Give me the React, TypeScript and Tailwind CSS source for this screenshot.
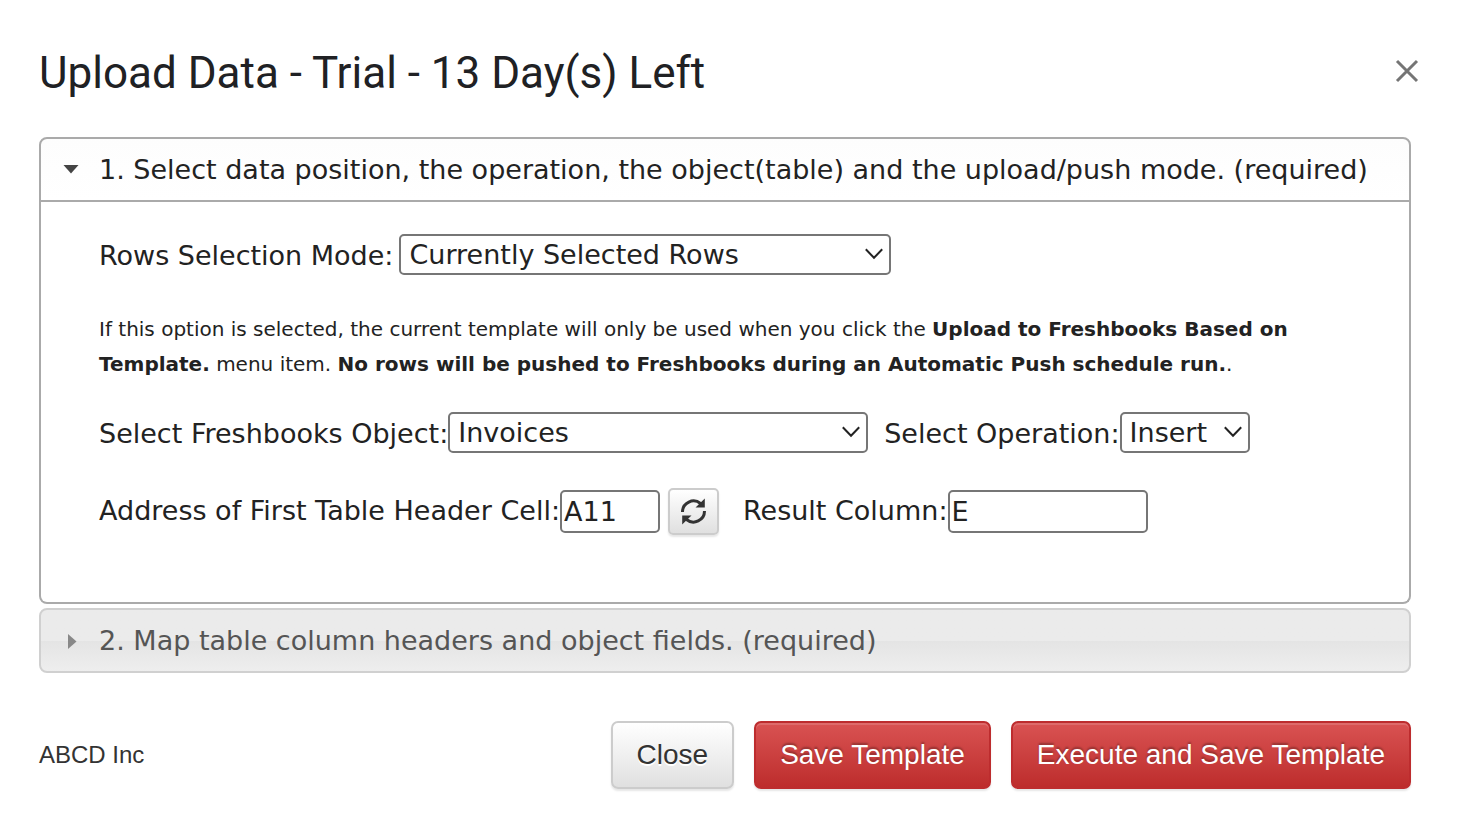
import { useState } from "react";
import type { ReactNode } from "react";
import clsx from "clsx";

interface SelectFieldProps {
  id: string;
  label: string;
  options: string[];
  className: string;
  labelClassName?: string;
}

function SelectField({ id, label, options, className, labelClassName }: SelectFieldProps) {
  return (
    <div className="flex items-center">
      <label htmlFor={id} className={clsx("whitespace-nowrap pt-0.5 leading-[39px]", labelClassName)}>
        {label}
      </label>
      <div className={clsx("relative", className)}>
        <select
          id={id}
          className="block h-[41px] w-full appearance-none rounded-[5px] border-2 border-[#767676] bg-white pl-2 pr-9 text-[27px] leading-[37px] text-[#222]"
        >
          {options.map((option) => (
            <option key={option}>{option}</option>
          ))}
        </select>
        <svg
          className="pointer-events-none absolute right-2 top-[14px] h-3 w-[18px]"
          viewBox="0 0 18 12"
          fill="none"
          stroke="#222"
          strokeWidth="2"
          aria-hidden="true"
        >
          <path d="M0.8 1.3 9 9.8l8.2-8.5" />
        </svg>
      </div>
    </div>
  );
}

interface TextFieldProps {
  id: string;
  label: string;
  value: string;
  className: string;
}

function TextField({ id, label, value, className }: TextFieldProps) {
  return (
    <div className="flex items-center">
      <label htmlFor={id} className="whitespace-nowrap">
        {label}
      </label>
      <input
        id={id}
        type="text"
        defaultValue={value}
        className={clsx(
          "h-[43px] rounded-[5px] border-2 border-[#767676] bg-white px-0.5 text-[27px] leading-[39px] text-[#222]",
          className
        )}
      />
    </div>
  );
}

interface SectionProps {
  title: string;
  open: boolean;
  onToggle: () => void;
  children?: ReactNode;
}

function Section({ title, open, onToggle, children }: SectionProps) {
  return (
    <section>
      <h2>
        <button
          type="button"
          aria-expanded={open}
          onClick={onToggle}
          className={clsx(
            "flex h-[65px] w-full items-center border-2 pl-[21px] text-left text-[27px]",
            open
              ? "rounded-t-lg border-[#aaa] bg-linear-to-b from-[#fdfdfd] to-white text-[#222]"
              : "rounded-lg border-[#d0d0d0] bg-linear-to-b from-[#ebebeb] from-50% via-[#e4e4e4] via-50% to-[#eee] text-[#555]"
          )}
        >
          <svg className="mr-[17px] size-5 shrink-0" viewBox="0 0 20 20" aria-hidden="true">
            {open ? (
              <path d="M1.500 5h15l-7.500 8.500z" fill="#444" />
            ) : (
              <path d="M6 3v15l8.500-7.500z" fill="#888" />
            )}
          </svg>
          <span className="whitespace-nowrap pt-0.5">{title}</span>
        </button>
      </h2>
      {open && (
        <div className="rounded-b-lg border-2 border-t-0 border-[#aaa] px-[58px] pb-[67px] pt-8">
          {children}
        </div>
      )}
    </section>
  );
}

function ActionButton({ children, primary }: { children: ReactNode; primary?: boolean }) {
  return (
    <button
      type="button"
      className={clsx(
        "h-[68px] whitespace-nowrap rounded-[7px] border-2 px-6 text-[28px]",
        primary
          ? "border-[#bd2c2e] bg-linear-to-b from-[#d95252] to-[#bd2c2c] text-white shadow-[inset_0_2px_0_rgba(255,255,255,0.15),0_2px_2px_rgba(0,0,0,0.1)] [text-shadow:0_-2px_2px_rgba(0,0,0,0.3)]"
          : "border-[#ccc] bg-linear-to-b from-white to-[#e0e0e0] text-[#333] shadow-[0_2px_2px_rgba(0,0,0,0.1)] [text-shadow:0_2px_0_#fff]"
      )}
    >
      {children}
    </button>
  );
}

export default function App() {
  const [active, setActive] = useState(1);

  return (
    <div className="min-h-screen bg-white pb-[49px] pl-[39px] pr-[71px] font-['Verdana','DejaVu_Sans',sans-serif] text-[27px] text-[#222]">
      <header className="-mr-3 flex items-center justify-between pb-9 pt-[45px]">
        <h1 className="font-['Google_Sans','Roboto',sans-serif] text-[44px] leading-[56px] text-[#202124]">
          Upload Data - Trial - 13 Day(s) Left
        </h1>
        <button type="button" aria-label="Close dialog" className="px-1 pb-1">
          <svg className="block size-6" viewBox="0 0 24 24" stroke="#757575" strokeWidth="3" aria-hidden="true">
            <path d="M2 2l20 20M22 2 2 22" />
          </svg>
        </button>
      </header>

      <main className="flex flex-col gap-1">
        <Section
          title="1. Select data position, the operation, the object(table) and the upload/push mode. (required)"
          open={active === 1}
          onToggle={() => setActive(1)}
        >
          <SelectField
            id="rows-mode"
            label="Rows Selection Mode:"
            options={["Currently Selected Rows"]}
            labelClassName="mr-1.5"
            className="w-[492px]"
          />
          <p className="mb-[30px] mt-[37px] text-[20px] leading-[35px]">
            If this option is selected, the current template will only be used when you click the{" "}
            <b>Upload to Freshbooks Based on Template.</b> menu item.{" "}
            <b>No rows will be pushed to Freshbooks during an Automatic Push schedule run.</b>.
          </p>
          <div className="flex items-center gap-4">
            <SelectField
              id="object"
              label="Select Freshbooks Object:"
              options={["Invoices"]}
              className="w-[420px]"
            />
            <SelectField
              id="operation"
              label="Select Operation:"
              options={["Insert"]}
              className="w-[130px]"
            />
          </div>
          <div className="mt-[35px] flex items-center">
            <TextField id="header-cell" label="Address of First Table Header Cell:" value="A11" className="w-[100px]" />
            <button
              type="button"
              aria-label="Refresh address"
              className="ml-2 mr-6 flex h-[47px] w-[51px] items-center justify-center rounded-[5px] border-2 border-[#ccc] bg-linear-to-b from-white to-[#e0e0e0] shadow-[0_2px_2px_rgba(0,0,0,0.1)]"
            >
              <svg className="size-[27px]" viewBox="0 0 27 27" aria-hidden="true">
                <path
                  d="M2.500 14A11 11 0 0 1 20.500 5.500M24.500 13A11 11 0 0 1 6.500 21.500"
                  fill="none"
                  stroke="#333"
                  strokeWidth="3"
                />
                <path d="M24.800 .500v9h-9.300zM2.200 26.500v-9h9.300z" fill="#333" />
              </svg>
            </button>
            <TextField id="result-column" label="Result Column:" value="E" className="w-[200px]" />
          </div>
        </Section>
        <Section
          title="2. Map table column headers and object fields. (required)"
          open={active === 2}
          onToggle={() => setActive(2)}
        />
      </main>

      <footer className="mt-12 flex items-center justify-between font-['Liberation_Sans',Arial,sans-serif]">
        <span className="text-[24px] text-[#333]">ABCD Inc</span>
        <div className="flex gap-5">
          <ActionButton>Close</ActionButton>
          <ActionButton primary>Save Template</ActionButton>
          <ActionButton primary>Execute and Save Template</ActionButton>
        </div>
      </footer>
    </div>
  );
}
